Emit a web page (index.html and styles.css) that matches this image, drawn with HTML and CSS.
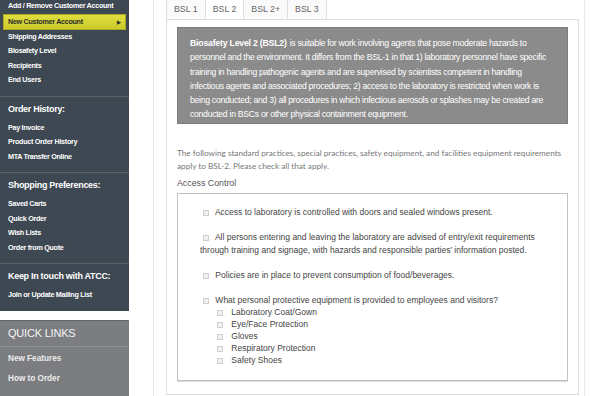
FILE: index.html
```html
<!DOCTYPE html>
<html lang="en">
<head>
    <meta charset="UTF-8">
    <meta name="viewport" content="width=device-width, initial-scale=1.0">
    <title>Biosafety Level</title>
    <link rel="stylesheet" href="styles.css">
</head>
<body>
    <div class="page">
        <!-- Menu lateral da conta -->
        <aside class="sidebar">
            <div class="nav-box">
                <ul class="nav-list nav-top">
                    <li><a href="#">Add / Remove Customer Account</a></li>
                    <li class="active"><a href="#">New Customer Account <span class="arrow">&#9654;</span></a></li>
                    <li><a href="#">Shipping Addresses</a></li>
                    <li><a href="#">Biosafety Level</a></li>
                    <li><a href="#">Recipients</a></li>
                    <li><a href="#">End Users</a></li>
                </ul>
                <div class="nav-section">
                    <h3>Order History:</h3>
                    <ul class="nav-list">
                        <li><a href="#">Pay Invoice</a></li>
                        <li><a href="#">Product Order History</a></li>
                        <li><a href="#">MTA Transfer Online</a></li>
                    </ul>
                </div>
                <div class="nav-section">
                    <h3>Shopping Preferences:</h3>
                    <ul class="nav-list">
                        <li><a href="#">Saved Carts</a></li>
                        <li><a href="#">Quick Order</a></li>
                        <li><a href="#">Wish Lists</a></li>
                        <li><a href="#">Order from Quote</a></li>
                    </ul>
                </div>
                <div class="nav-section last">
                    <h3>Keep In touch with ATCC:</h3>
                    <ul class="nav-list">
                        <li><a href="#">Join or Update Mailing List</a></li>
                    </ul>
                </div>
            </div>
            <div class="quick-links">
                <h3>QUICK LINKS</h3>
                <ul>
                    <li><a href="#">New Features</a></li>
                    <li><a href="#">How to Order</a></li>
                </ul>
            </div>
        </aside>

        <!-- Conteúdo principal com as abas -->
        <main class="content">
            <ul class="tabs">
                <li><a href="#">BSL 1</a></li>
                <li class="active"><a href="#">BSL 2</a></li>
                <li><a href="#">BSL 2+</a></li>
                <li><a href="#">BSL 3</a></li>
            </ul>
            <div class="tab-panel">
                <div class="level-info">
                    <p><b>Biosafety Level 2 (BSL2)</b> is suitable for work involving agents that pose moderate hazards to personnel and the environment. It differs from the BSL-1 in that 1) laboratory personnel have specific training in handling pathogenic agents and are supervised by scientists competent in handling infectious agents and associated procedures; 2) access to the laboratory is restricted when work is being conducted; and 3) all procedures in which infectious aerosols or splashes may be created are conducted in BSCs or other physical containment equipment.</p>
                </div>
                <p class="intro">The following standard practices, special practices, safety equipment, and facilities equipment requirements apply to BSL-2. Please check all that apply.</p>

                <h4 class="group-title">Access Control</h4>
                <div class="group-box">
                    <p class="check-item"><label><input type="checkbox"> Access to laboratory is controlled with doors and sealed windows present.</label></p>
                    <p class="check-item"><label><input type="checkbox"> All persons entering and leaving the laboratory are advised of entry/exit requirements through training and signage, with hazards and responsible parties&#8217; information posted.</label></p>
                    <p class="check-item"><label><input type="checkbox"> Policies are in place to prevent consumption of food/beverages.</label></p>
                    <div class="check-item question">
                        <label><input type="checkbox"> What personal protective equipment is provided to employees and visitors?</label>
                        <ul class="sub-checks">
                            <li><label><input type="checkbox"> Laboratory Coat/Gown</label></li>
                            <li><label><input type="checkbox"> Eye/Face Protection</label></li>
                            <li><label><input type="checkbox"> Gloves</label></li>
                            <li><label><input type="checkbox"> Respiratory Protection</label></li>
                            <li><label><input type="checkbox"> Safety Shoes</label></li>
                        </ul>
                    </div>
                </div>
            </div>
        </main>
    </div>
</body>
</html>
```

FILE: styles.css
```css
/* Página geral */
body {
    margin: 0;
    background: #fff;
    font-family: "Liberation Sans", Arial, sans-serif;
    color: #444;
}
ul {
    list-style: none;
    margin: 0;
    padding: 0;
}
a {
    text-decoration: none;
    color: inherit;
}
.page {
    display: flex;
    min-height: 100vh;
}

/* Menu lateral */
.sidebar {
    width: 129px;
    flex-shrink: 0;
}
.nav-box {
    background: #3d4852;
    margin-top: -1px;
}
.nav-list {
    padding-bottom: 8px;
}
.nav-top {
    border-bottom: 1px solid #56616a;
}
.nav-list a {
    display: block;
    padding: 0 8px;
    line-height: 14.5px;
    color: #fff;
    font-size: 7.2px;
    letter-spacing: -0.3px;
    font-weight: bold;
    white-space: nowrap;
}
.nav-list li.active {
    margin: 0 3px;
    background: linear-gradient(#e0df3e, #cbca2a);
    border: 1px solid #aaa820;
}
.nav-list li.active a {
    display: flex;
    justify-content: space-between;
    align-items: center;
    padding: 0 4px;
    line-height: 14px;
    color: #2b2b2b;
}
.arrow {
    font-size: 5px;
}
.nav-section {
    border-bottom: 1px solid #56616a;
}
.nav-section.last {
    border-bottom: none;
}
.nav-section h3 {
    margin: 0;
    padding: 5px 8px;
    line-height: 14px;
    color: #fff;
    font-size: 9px;
    letter-spacing: -0.3px;
    font-weight: bold;
    white-space: nowrap;
}

/* Links rápidos */
.quick-links {
    margin-top: 9px;
    background: #7b7d81;
    border-top: 1px solid #626468;
    min-height: 80px;
}
.quick-links h3 {
    margin: 0;
    padding: 4px 8px 5px;
    line-height: 16px;
    font-size: 11px;
    font-weight: normal;
    letter-spacing: -0.2px;
    color: #f4f4f4;
    border-bottom: 1px solid #8f9195;
}
.quick-links ul {
    padding-top: 2px;
}
.quick-links a {
    display: block;
    padding: 0 8px;
    line-height: 20px;
    font-size: 8.2px;
    font-weight: bold;
    color: #ececec;
}

/* Área principal */
.content {
    flex: 1;
    margin: 0 5px 0 24px;
    padding: 0 5px 0 12px;
    border-left: 1px solid #e9e9e9;
    border-right: 1px solid #e9e9e9;
}
.tabs {
    display: flex;
}
.tabs li {
    border-left: 1px solid #dedede;
    background: #fafafa;
}
.tabs li:last-child {
    border-right: 1px solid #dedede;
}
.tabs li.active {
    background: #fff;
}
.tabs a {
    display: block;
    padding: 0 7px;
    line-height: 19px;
    font-size: 8.8px;
    color: #666;
}
.tab-panel {
    border: 1px solid #dedede;
    padding: 7px 10px 13px;
}

/* Caixa cinza com a descrição */
.level-info {
    background: #8b8b8b;
    border: 1px solid #7c7c7c;
    padding: 8px 12px 1px;
}
.level-info p {
    margin: 0;
    color: #fff;
    font-size: 8.7px;
    letter-spacing: -0.3px;
    line-height: 14.3px;
}
.level-info b {
    letter-spacing: -0.2px;
    margin-right: 1px;
}
.intro {
    margin: 23px 0 0;
    font-family: Lato, sans-serif;
    font-size: 8.2px;
    line-height: 13.4px;
    color: #777;
}
.group-title {
    margin: 3px 0 3px;
    font-size: 8.8px;
    font-weight: normal;
    line-height: 13px;
    color: #555;
}

/* Lista de verificação */
.group-box {
    border: 1px solid #c2c2c2;
    box-shadow: 0 1px 0 #dcdcdc;
    padding: 12px 20px 14px 22px;
}
.check-item {
    margin: 0 0 12px;
    font-size: 8.5px;
    line-height: 13px;
    color: #444;
    text-indent: 3px;
}
.check-item.question {
    margin-bottom: 0;
    line-height: 12px;
}
input[type="checkbox"] {
    appearance: none;
    -webkit-appearance: none;
    width: 6px;
    height: 6px;
    margin: 0 4px 0 0;
    border: 1px solid #cfcfcf;
    background: #f1f1f1;
    vertical-align: -1px;
}
.sub-checks {
    padding-left: 17px;
    text-indent: 0;
}
.sub-checks li {
    line-height: 12px;
}
.sub-checks input[type="checkbox"] {
    margin-right: 6px;
}
```
